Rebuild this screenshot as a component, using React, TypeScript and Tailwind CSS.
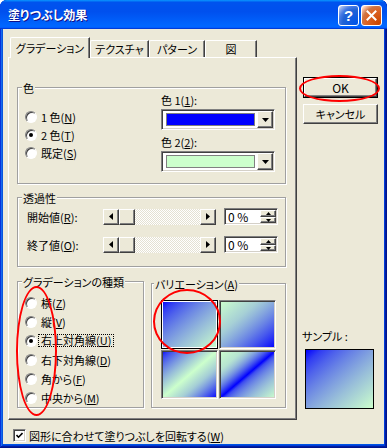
import type { ReactNode } from 'react';

const sunken =
  'border border-t-[#808080] border-l-[#808080] border-r-white border-b-white shadow-[inset_1px_1px_0_#404040,inset_-1px_-1px_0_#d4d0c8]';
const raised =
  'border border-t-white border-l-white border-r-[#404040] border-b-[#404040] shadow-[inset_-1px_-1px_0_#808080] bg-[#ece9d8]';
const etched = 'relative border border-[#a0a0a0] shadow-[inset_1px_1px_0_#fff,1px_1px_0_#fff]';

function Radio({ checked = false, focused = false, children }: { checked?: boolean; focused?: boolean; children: ReactNode }) {
  return (
    <div className="flex items-center">
      <span className="flex items-center justify-center w-[12px] h-[12px] rounded-full bg-white border border-t-[#808080] border-l-[#808080] border-r-white border-b-white shadow-[inset_1px_1px_0_#404040]">
        {checked && <span className="w-[4px] h-[4px] rounded-full bg-black" />}
      </span>
      {focused ? (
        <span className="ml-[1px] px-[2px] border border-dotted border-black leading-[11px]">{children}</span>
      ) : (
        <span className="ml-[4px]">{children}</span>
      )}
    </div>
  );
}

function Combo({ swatch }: { swatch: string }) {
  return (
    <div className={`flex w-[114px] h-[21px] p-[1px] bg-white ${sunken}`}>
      <div className="flex-1 flex items-center pl-[3px]">
        <div className={`w-[89px] h-[13px] border border-[#808080] ${swatch}`} />
      </div>
      <div className={`w-[16px] flex items-center justify-center ${raised}`}>
        <svg width="7" height="4" viewBox="0 0 7 4">
          <path d="M0 0h7L3.5 4z" fill="#000" />
        </svg>
      </div>
    </div>
  );
}

function ArrowBtn({ dir }: { dir: 'left' | 'right' }) {
  return (
    <div className={`w-[16px] h-[16px] flex items-center justify-center ${raised}`}>
      <svg width="4" height="7" viewBox="0 0 4 7">
        <path d={dir === 'left' ? 'M4 0v7L0 3.5z' : 'M0 0v7l4-3.5z'} fill="#000" />
      </svg>
    </div>
  );
}

function Scroll() {
  return (
    <div className="flex w-[113px] h-[16px]">
      <ArrowBtn dir="left" />
      <div className={`w-[16px] h-[16px] ${raised}`} />
      <div className="flex-1 bg-[repeating-conic-gradient(#ffffff_0%_25%,#e4e1d2_0%_50%)] bg-[length:2px_2px]" />
      <ArrowBtn dir="right" />
    </div>
  );
}

function Spin() {
  return (
    <div className={`flex w-[54px] h-[17px] p-[1px] bg-white ${sunken}`}>
      <div className="flex-1 pl-[2px] leading-[13px] text-[12px]">0 %</div>
      <div className="w-[16px] flex flex-col">
        <div className={`h-[7px] flex items-center justify-center ${raised}`}>
          <svg width="5" height="3" viewBox="0 0 5 3">
            <path d="M2.5 0L5 3H0z" fill="#000" />
          </svg>
        </div>
        <div className={`h-[6px] flex items-center justify-center ${raised}`}>
          <svg width="5" height="3" viewBox="0 0 5 3">
            <path d="M0 0h5L2.5 3z" fill="#000" />
          </svg>
        </div>
      </div>
    </div>
  );
}

const tabs = [
  { label: 'グラデーション', w: 'w-[80px]', active: true },
  { label: 'テクスチャ', w: 'w-[59px]', active: false },
  { label: 'パターン', w: 'w-[56px]', active: false },
  { label: '図', w: 'w-[52px]', active: false },
];

export default function App() {
  return (
    <div className="relative w-[387px] h-[448px] flex flex-col overflow-hidden rounded-t-[7px] bg-[#0054e3] shadow-[inset_-1px_-1px_#00138c,inset_1px_1px_#0831d9,inset_-2px_-2px_#001ea0,inset_2px_2px_#166aee,inset_-3px_-3px_#003bda,inset_3px_3px_#0855dd] font-['Noto_Sans_CJK_JP',sans-serif] text-[11px] leading-[12px] text-black [font-feature-settings:'palt']">
      {/* title bar */}
      <div className="h-[29px] shrink-0 flex items-start pl-[8px] pr-[5px] bg-[linear-gradient(180deg,#0997ff,#0053ee_8%,#0050ee_40%,#06f_88%,#06f_93%,#005bff_95%,#003dd7_96%,#003dd7)]">
        <div className="mt-[7px] text-white font-bold text-[12px] leading-[16px] [text-shadow:1px_1px_#0f1089]">塗りつぶし効果</div>
        <div className="ml-auto mt-[5px] flex gap-[2px]">
          <div className="w-[21px] h-[21px] rounded-[3px] border border-white flex items-center justify-center bg-[radial-gradient(circle_at_90%_90%,#0054e9_0,#2263d5_55%,#4479e4_70%,#a3bbec_90%,#fff_100%)] text-white font-bold text-[15px] leading-[15px] font-['Liberation_Sans',sans-serif]">
            ?
          </div>
          <div className="w-[21px] h-[21px] rounded-[3px] border border-white flex items-center justify-center bg-[radial-gradient(circle_at_90%_90%,#cc4600_0,#dc6527_55%,#cd7546_70%,#ffccb2_90%,#fff_100%)]">
            <svg width="11" height="11" viewBox="0 0 11 11">
              <path d="M1.5 1.5l8 8M9.5 1.5l-8 8" stroke="#fff" strokeWidth="2" strokeLinecap="square" />
            </svg>
          </div>
        </div>
      </div>

      {/* body */}
      <div className="flex-1 mx-[3px] mb-[4px] bg-[#ece9d8] flex flex-col">
        <div className="flex">
          <div className="ml-[5px] mt-[8px] w-[289px] flex flex-col">
            <div className="flex items-end h-[20px] pl-[2px]">
              {tabs.map((t) =>
                t.active ? (
                  <div
                    key={t.label}
                    className={`relative z-10 ${t.w} h-[21px] -mb-[1px] flex items-center justify-center bg-[#ece9d8] border-t border-l border-r border-t-white border-l-white border-r-[#404040] shadow-[inset_-1px_0_0_#808080] rounded-tl-[2px]`}
                  >
                    {t.label}
                  </div>
                ) : (
                  <div
                    key={t.label}
                    className={`${t.w} h-[17px] flex items-center justify-center border-t border-l border-r border-t-white border-l-white border-r-[#404040] shadow-[inset_-1px_0_0_#808080] rounded-tl-[2px]`}
                  >
                    {t.label}
                  </div>
                )
              )}
            </div>

            <div className="h-[363px] flex flex-col pl-[8px] border border-t-white border-l-white border-r-[#404040] border-b-[#404040] shadow-[inset_-1px_-1px_0_#808080]">
              {/* 色 */}
              <div className={`mt-[29px] w-[269px] h-[97px] flex ${etched}`}>
                <span className="absolute -top-[7px] left-[4px] px-[1px] leading-[14px] bg-[#ece9d8]">色</span>
                <div className="w-[143px] pt-[20px] pl-[7px] flex flex-col">
                  <div className="h-[18px] flex items-center">
                    <Radio>1 色(<u>N</u>)</Radio>
                  </div>
                  <div className="h-[18px] flex items-center">
                    <Radio checked>2 色(<u>T</u>)</Radio>
                  </div>
                  <div className="h-[18px] flex items-center">
                    <Radio>既定(<u>S</u>)</Radio>
                  </div>
                </div>
                <div className="pt-[6px] flex flex-col">
                  <div>
                    色 1(<u>1</u>):
                  </div>
                  <div className="mt-[3px]">
                    <Combo swatch="bg-[#0000ff]" />
                  </div>
                  <div className="mt-[6px]">
                    色 2(<u>2</u>):
                  </div>
                  <div className="mt-[3px]">
                    <Combo swatch="bg-[#ccffcc]" />
                  </div>
                </div>
              </div>

              {/* 透過性 */}
              <div className={`mt-[13px] w-[269px] h-[70px] pt-[10px] pl-[9px] flex flex-col gap-[11px] ${etched}`}>
                <span className="absolute -top-[7px] left-[4px] px-[1px] leading-[14px] bg-[#ece9d8]">透過性</span>
                <div className="flex items-center h-[17px]">
                  <div className="w-[76px]">
                    開始値(<u>R</u>):
                  </div>
                  <Scroll />
                  <div className="ml-[8px]">
                    <Spin />
                  </div>
                </div>
                <div className="flex items-center h-[17px]">
                  <div className="w-[76px]">
                    終了値(<u>O</u>):
                  </div>
                  <Scroll />
                  <div className="ml-[8px]">
                    <Spin />
                  </div>
                </div>
              </div>

              <div className="mt-[14px] flex items-start">
                {/* グラデーションの種類 */}
                <div className={`w-[127px] h-[127px] pt-[11px] pl-[7px] flex flex-col ${etched}`}>
                  <span className="absolute -top-[7px] left-[4px] px-[1px] leading-[14px] bg-[#ece9d8]">グラデーションの種類</span>
                  <div className="h-[19px] flex items-center">
                    <Radio>横(<u>Z</u>)</Radio>
                  </div>
                  <div className="h-[19px] flex items-center">
                    <Radio>縦(<u>V</u>)</Radio>
                  </div>
                  <div className="h-[19px] flex items-center">
                    <Radio checked focused>
                      右上対角線(<u>U</u>)
                    </Radio>
                  </div>
                  <div className="h-[19px] flex items-center">
                    <Radio>右下対角線(<u>D</u>)</Radio>
                  </div>
                  <div className="h-[19px] flex items-center">
                    <Radio>角から(<u>F</u>)</Radio>
                  </div>
                  <div className="h-[19px] flex items-center">
                    <Radio>中央から(<u>M</u>)</Radio>
                  </div>
                </div>

                {/* バリエーション */}
                <div className={`ml-[7px] mt-[2px] w-[135px] h-[125px] pt-[16px] pl-[9px] ${etched}`}>
                  <span className="absolute -top-[7px] left-[2px] px-[1px] leading-[14px] bg-[#ece9d8]">
                    バリエーション(<u>A</u>)
                  </span>
                  <div className="grid grid-cols-[57px_57px] grid-rows-[49px_49px] gap-[1px]">
                    <div className="border border-black shadow-[inset_0_0_0_1px_#fff] bg-[linear-gradient(to_bottom_right,#0000ff,35%,#ccffcc)]" />
                    <div className={`${sunken} bg-[linear-gradient(to_bottom_right,#ccffcc,65%,#0000ff)]`} />
                    <div className={`${sunken} bg-[linear-gradient(to_bottom_right,#0000ff,18%,#ccffcc_50%,82%,#0000ff)]`} />
                    <div className={`${sunken} bg-[linear-gradient(to_bottom_right,#ccffcc,38%,#0000ff_50%,62%,#ccffcc)]`} />
                  </div>
                </div>
              </div>
            </div>
          </div>

          {/* buttons + sample */}
          <div className="ml-[6px] w-[75px] flex flex-col">
            <div className="mt-[48px] h-[21px] border border-black">
              <div className={`h-full flex items-center justify-center text-[12px] ${raised}`}>OK</div>
            </div>
            <div className={`mt-[6px] h-[20px] flex items-center justify-center ${raised}`}>キャンセル</div>
            <div className="mt-[206px] -ml-[1px]">サンプル :</div>
            <div className="mt-[7px] ml-[2px] w-[69px] h-[60px] border border-black bg-[linear-gradient(to_bottom_right,#0000ff,35%,#ccffcc)]" />
          </div>
        </div>

        <div className="mt-[9px] pl-[10px] flex items-center h-[13px]">
          <div className={`w-[13px] h-[13px] flex items-center justify-center bg-white ${sunken}`}>
            <svg width="7" height="7" viewBox="0 0 7 7">
              <path d="M0.5 3l2 2.2L6.5 1" fill="none" stroke="#000" strokeWidth="1.6" />
            </svg>
          </div>
          <span className="ml-[3px]">
            図形に合わせて塗りつぶしを回転する(<u>W</u>)
          </span>
        </div>
      </div>

      {/* red annotation ovals */}
      <div className="absolute left-[299px] top-[75px] w-[81px] h-[27px] rounded-[50%] border-2 border-[#f00]" />
      <div className="absolute left-[16px] top-[286px] w-[41px] h-[130px] rounded-[50%] border-2 border-[#f00]" />
      <div className="absolute left-[153px] top-[289px] w-[68px] h-[65px] rounded-[50%] border-2 border-[#f00]" />
    </div>
  );
}
